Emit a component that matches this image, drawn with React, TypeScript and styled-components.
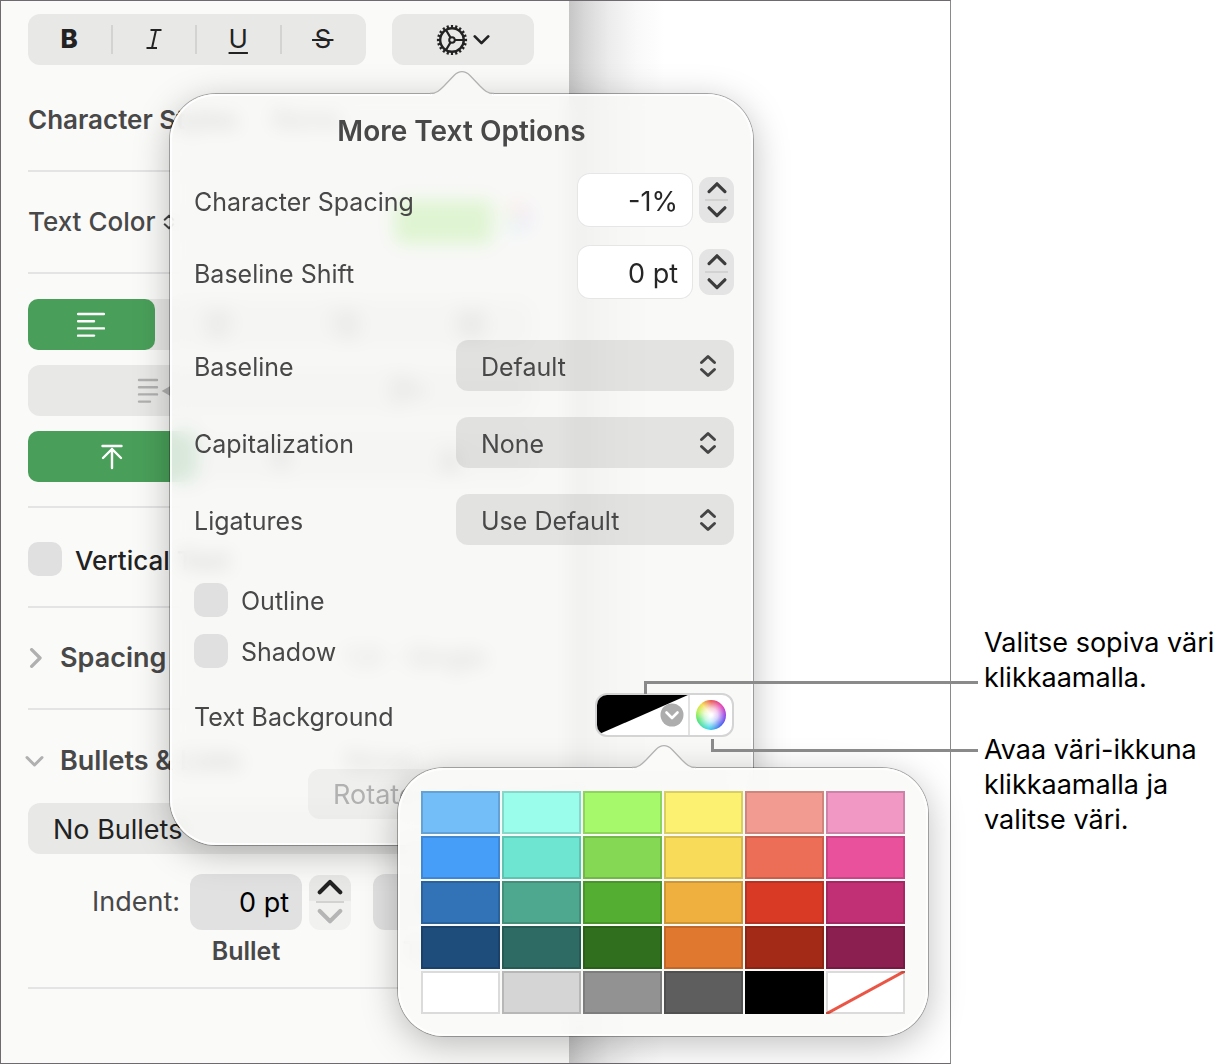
import React from "react";
import styled, { createGlobalStyle, css } from "styled-components";

const ink = "#484848";
const green = "#499f59";
const line = "#e4e4e4";

const GlobalStyle = createGlobalStyle`
  * { box-sizing: border-box; }
  body { margin: 0; background: #fff; }
  body, button, input, select {
    font-family: Inter, "Liberation Sans", sans-serif;
    font-size: 27px;
    line-height: 34px;
    color: ${ink};
  }
  button, input, select { margin: 0; padding: 0; border: 0; background: none; outline: none; appearance: none; }
  svg { display: block; flex: none; }
  h2, h3, p { margin: 0; font-size: 27px; font-weight: 600; }
`;

const Page = styled.main`
  display: grid;
  grid-template-columns: minmax(0, 1fr) 270px;
  min-height: 100vh;
`;

const Window = styled.section`
  position: relative;
  display: flex;
  border: 1px solid #6e6a6f;
  border-right-color: #8a8a8a;
`;

const Sidebar = styled.aside`
  flex: 0 0 568px;
  padding: 13px 35px 20px 27px;
  background: #fafaf9;
`;

const Canvas = styled.div`
  flex: 1;
  background: linear-gradient(90deg, #c6c6c6 0, #d8d8d8 16px, #ececec 40px, #f9f9f9 68px, #fff 96px);
`;

const Divider = styled.hr`
  margin: 0;
  height: 2px;
  border: 0;
  background: ${line};
`;

const Toolbar = styled.div`
  display: flex;
  gap: 26px;
  height: 51px;
  margin-bottom: 5px;
`;

const Group = styled.div`
  display: flex;
  flex: 1;
  height: 51px;
  border-radius: 12px;
  background: #e8e8e7;
`;

const Tool = styled.button<{ $rule?: boolean }>`
  position: relative;
  flex: 1;
  display: flex;
  align-items: center;
  justify-content: center;
  padding: 0 2px 2px 0;
  color: #222;
  ${(p) => p.$rule && css`
    &::after {
      content: "";
      position: absolute;
      right: 0;
      top: 11px;
      width: 2px;
      height: 29px;
      background: #d3d3d2;
    }
  `}
`;

const Glyph = styled.span<{ $bold?: boolean; $line?: string }>`
  font-size: 26px;
  font-weight: ${(p) => (p.$bold ? 800 : 400)};
  text-decoration: ${(p) => p.$line || "none"};
  text-decoration-thickness: 2px;
  text-underline-offset: 4px;
`;

const GearButton = styled.button`
  display: flex;
  align-items: center;
  justify-content: center;
  gap: 5px;
  width: 142px;
  border-radius: 12px;
  background: #e8e8e7;
`;

const Row = styled.div<{ $h?: number }>`
  display: flex;
  align-items: center;
  height: ${(p) => p.$h || 100}px;
`;

const CheckRow = styled(Row)`
  height: 98px;
  padding-top: 4px;
`;

const Name = styled.h3`
  width: 244px;
  font-size: 26px;
`;

const PlainName = styled.span`
  margin-right: 8px;
  font-size: 26px;
  font-weight: 500;
`;

const ColorChip = styled.button`
  width: 98px;
  height: 44px;
  margin-left: auto;
  border-radius: 8px 0 0 8px;
  background: #6ee42c;
`;

const Wheel = styled.button<{ $size: number }>`
  width: ${(p) => p.$size}px;
  height: ${(p) => p.$size}px;
  border-radius: 50%;
  background:
    radial-gradient(closest-side, #fff 8%, rgba(255, 255, 255, 0.75) 45%, rgba(255, 255, 255, 0) 100%),
    conic-gradient(#e8504a, #e23ab4 50deg, #8a3fe8 95deg, #3c5cf0 135deg, #35d6e6 190deg, #4fe36c 250deg, #b4f04a 285deg, #f6d93c 320deg, #e8504a);
`;

const WheelSlot = styled.span`
  margin: 0 4px 0 10px;
`;

const Segments = styled.div`
  display: grid;
  gap: 15px;
  padding: 25px 0 24px;
`;

const Segment = styled.button<{ $on?: boolean; $dim?: boolean }>`
  flex: 1;
  display: flex;
  align-items: center;
  justify-content: center;
  border-radius: 10px;
  color: ${(p) => (p.$on ? "#fff" : p.$dim ? "#b0b0b0" : "#3a3a3a")};
  background: ${(p) => (p.$on ? green : "transparent")};
`;

const CheckLabel = styled.label<{ $dark?: boolean }>`
  display: flex;
  align-items: center;
  gap: 13px;
  font-size: ${(p) => (p.$dark ? 26 : 25)}px;
  font-weight: ${(p) => (p.$dark ? 500 : 400)};
  color: ${(p) => (p.$dark ? "#222" : ink)};
`;

const CheckText = styled.span`
  padding-top: 3px;
`;

const Check = styled.input`
  width: 34px;
  height: 34px;
  border-radius: 10px;
  background: #e0e0e0;
`;

const Disclosure = styled.button`
  display: flex;
  align-items: center;
  gap: 14px;
  width: 322px;
  margin-left: -5px;
  font-weight: 600;
`;

const DisclosureMark = styled.span`
  display: flex;
  justify-content: center;
  width: 23px;
`;

const HeaderRow = styled(Row)`
  height: 93px;
  padding-top: 9px;
`;

const SelectBox = styled.div<{ $w?: number }>`
  position: relative;
  width: ${(p) => (p.$w ? p.$w + "px" : "100%")};
`;

const Select = styled.select<{ $dark?: boolean }>`
  width: 100%;
  height: 51px;
  padding: 2px 60px 0 25px;
  border-radius: 12px;
  font-size: ${(p) => (p.$dark ? 27 : 25)}px;
  color: ${(p) => (p.$dark ? "#222" : ink)};
  background: ${(p) => (p.$dark ? "#e8e8e7" : "rgba(0, 0, 0, 0.085)")};
`;

const SelectMark = styled.span`
  position: absolute;
  right: 17px;
  top: 14px;
  pointer-events: none;
`;

const IndentRow = styled.div`
  display: grid;
  grid-template-columns: 155px 112px 42px 112px;
  column-gap: 7px;
  margin: 20px 0 15px;
  align-items: center;
`;

const IndentLabel = styled.label`
  padding-right: 3px;
  text-align: right;
`;

const IndentField = styled.input`
  width: 100%;
  height: 56px;
  padding: 0 13px;
  border-radius: 12px;
  background: #e1e1e1;
  color: #000;
  text-align: right;
`;

const NextField = styled.div`
  margin: 0 -15px 0 15px;
`;

const Caption = styled.span<{ $col: number }>`
  grid-column: ${(p) => p.$col};
  font-size: 25px;
  font-weight: 600;
  line-height: 42px;
  text-align: center;
`;

const TextCaption = styled(Caption)`
  padding-left: 30px;
`;

const Stepper = styled.div<{ $large?: boolean }>`
  width: ${(p) => (p.$large ? 42 : 35)}px;
  height: ${(p) => (p.$large ? 55 : 46)}px;
  display: grid;
  grid-template-rows: 1fr 2px 1fr;
  justify-items: center;
  overflow: hidden;
  border-radius: 11px;
  background: ${(p) => (p.$large ? "#f1f1f0" : "#e4e4e4")};
`;

const Step = styled.button<{ $fill?: boolean }>`
  display: flex;
  align-items: center;
  justify-content: center;
  width: 100%;
  background: ${(p) => (p.$fill ? "#e8e8e7" : "transparent")};
`;

const StepRule = styled.span`
  width: 66%;
  background: #d2d2d1;
`;

const Popover = styled.div<{ $strong?: boolean }>`
  position: absolute;
  border-radius: 46px;
  background: ${(p) => (p.$strong ? "rgba(250, 250, 249, 0.93)" : "rgba(248, 248, 247, 0.82)")};
  backdrop-filter: blur(9px);
  box-shadow:
    0 0 0 1px rgba(0, 0, 0, 0.3),
    0 8px 36px rgba(0, 0, 0, 0.26),
    inset 0 0 0 2px rgba(255, 255, 255, 0.8);
`;

const TextPopover = styled(Popover)`
  left: 169px;
  top: 93px;
  width: 583px;
  padding: 19px 19px 26px 24px;
`;

const SwatchPopover = styled(Popover)`
  left: 397px;
  top: 767px;
  width: 530px;
  padding: 23px 23px 22px;
`;

const ArrowSlot = styled.span<{ $left: number }>`
  position: absolute;
  left: ${(p) => p.$left}px;
  top: -24px;
`;

const Title = styled.h2`
  text-align: center;
  font-size: 28px;
  line-height: 36px;
  margin: 0 5px 25px 0;
`;

const Option = styled.div<{ $gap: number }>`
  display: flex;
  align-items: center;
  margin-bottom: ${(p) => p.$gap}px;
`;

const OptionLabel = styled.label`
  flex: 1;
  padding-top: 3px;
  font-size: 25px;
  white-space: nowrap;
`;

const Field = styled.input`
  width: 114px;
  height: 52px;
  margin-right: 7px;
  padding: 2px 14px 0;
  border-radius: 12px;
  background: #fff;
  box-shadow: 0 0 0 1px #e6e6e6;
  color: #262626;
  text-align: right;
`;

const Well = styled.div`
  display: flex;
  align-items: center;
  width: 139px;
  height: 44px;
  overflow: hidden;
  border: 2px solid #d4d4d4;
  border-radius: 12px;
  background: #fff;
`;

const WellColor = styled.button`
  width: 93px;
  height: 40px;
  border-right: 2px solid #e2e2e2;
`;

const WellWheel = styled.span`
  display: flex;
  flex: 1;
  justify-content: center;
`;

const Rotate = styled.button`
  display: block;
  width: 426px;
  height: 50px;
  margin-left: auto;
  padding: 2px 0 0 25px;
  border-radius: 12px;
  background: rgba(0, 0, 0, 0.04);
  color: #b1b1b1;
  text-align: left;
`;

const Swatches = styled.div`
  display: grid;
  grid-template-columns: repeat(6, 1fr);
  grid-auto-rows: 43px;
  gap: 2px;
`;

const Swatch = styled.button<{ $color: string }>`
  background: ${(p) => p.$color};
  box-shadow: inset 0 0 0 2px rgba(0, 0, 0, 0.14);
`;

const Connector = styled.span<{ $left: number; $top: number; $up?: boolean }>`
  position: absolute;
  left: ${(p) => p.$left}px;
  top: ${(p) => p.$top}px;
  right: -28px;
  height: 13px;
  border-left: 3px solid #8a8a8a;
  ${(p) => (p.$up ? "border-bottom" : "border-top")}: 3px solid #8a8a8a;
`;

const Callouts = styled.div`
  display: flex;
  flex-direction: column;
  gap: 37px;
  padding: 625px 0 0 33px;
`;

const Callout = styled.p`
  line-height: 35px;
  font-weight: 400;
  color: #000;
`;

const Chevron = ({ dir, color = "#3c3c3c", size = 18, w = 3 }: { dir: "up" | "down" | "right"; color?: string; size?: number; w?: number }) => {
  const d = { up: "M1.5 11 9 3.5l7.5 7.5", down: "M1.5 3.5 9 11l7.5-7.5", right: "M5.5 1 13 8.500l-7.500 7.500" }[dir];
  return (
    <svg width={size} height={dir === "right" ? size : Math.round(size * 0.8)} viewBox={dir === "right" ? "-0.500 -0.500 18 18" : "-0.5 0 19 15"} fill="none" stroke={color} strokeWidth={w} strokeLinecap="round" strokeLinejoin="round">
      <path d={d} />
    </svg>
  );
};

const UpDown = ({ small }: { small?: boolean }) => (
  <svg width={small ? 12 : 18} height={small ? 16 : 24} viewBox="0 0 18 24" fill="none" stroke="#454545" strokeWidth="3" strokeLinecap="round" strokeLinejoin="round">
    <path d="M2.500 8.500 9 2.500l6.500 6M2.500 15.500l6.500 6 6.500-6" />
  </svg>
);

const Gear = () => (
  <svg width="32" height="32" viewBox="-16 -16 32 32" fill="none" stroke="#222">
    <circle r="11.800" strokeWidth="2.400" />
    <circle r="13.600" strokeWidth="3" pathLength="40" strokeDasharray="1 1" strokeDashoffset="0.500" />
    <circle r="2.800" strokeWidth="2" />
    <path d="M3 0H11.500M-1.600-2.600-6-10M-1.600 2.600-6 10" strokeWidth="2.200" />
  </svg>
);

const Lines = ({ rows }: { rows: [number, number][] }) => (
  <svg width="28" height="26" viewBox="0 0 28 26" stroke="currentColor" strokeWidth="2.400" strokeLinecap="round">
    {rows.map(([a, b], i) => (
      <path key={i} d={`M${a} ${2 + i * 7.2}H${b}`} />
    ))}
  </svg>
);

const IndentIcon = ({ out }: { out?: boolean }) => (
  <svg width="36" height="26" viewBox="0 0 36 26" stroke="currentColor" strokeWidth="2.400" strokeLinecap="round">
    <path d="M2 2H20M2 9.200H20M2 16.400H20M2 23.600H13" />
    <path d={out ? "M33 13l-6-3.500v7z" : "M27 13l6-3.500v7z"} fill="currentColor" />
  </svg>
);

const VerticalIcon = ({ kind }: { kind: "top" | "middle" | "bottom" }) => (
  <svg width="22" height="26" viewBox="0 0 22 26" fill="none" stroke="currentColor" strokeWidth="2.400" strokeLinecap="round" strokeLinejoin="round">
    {kind === "top" && <path d="M1.500 2H20.500M11 24V5M2 14l9-9 9 9" />}
    {kind === "middle" && <path d="M1.500 13H20.500M11 1v8M7 5l4 4 4-4M11 25v-8M7 21l4-4 4 4" />}
    {kind === "bottom" && <path d="M1.500 24H20.500M11 2V21M2 12l9 9 9-9" />}
  </svg>
);

const Arrow = ({ left, fill }: { left: number; fill: string }) => (
  <ArrowSlot $left={left}>
    <svg width="64" height="27" viewBox="0 0 64 27">
      <path d="M2 24C8 23 10 20 14 16L24 5.500C29 .2 35 .2 40 5.500L50 16C54 20 56 23 62 24V27H2Z" fill={fill} />
      <path d="M0 23.500C7 23.500 10 20 14 16L24 5.500C29 .2 35 .2 40 5.500L50 16C54 20 57 23.500 64 23.500" fill="none" stroke="#b2b2b2" strokeWidth="1.300" />
    </svg>
  </ArrowSlot>
);

const colors = [
  "#73bdf9", "#9afcea", "#a5f96b", "#fdf171", "#f29b91", "#f198c5",
  "#479ef8", "#6de5d0", "#84d853", "#f8db59", "#ec6e57", "#ea519c",
  "#3173b6", "#4ea88f", "#54ae32", "#f0b03f", "#d83a26", "#c12f74",
  "#1e4c7b", "#2d6b64", "#306f1e", "#e1782f", "#a22a17", "#8a1f50",
  "#ffffff", "#d5d5d5", "#929292", "#5e5e5e", "#000000",
];

const Popup = ({ id, value, width, dark }: { id: string; value: string; width?: number; dark?: boolean }) => (
  <SelectBox $w={width}>
    <Select id={id} $dark={dark} aria-label={value} defaultValue={value}>
      <option>{value}</option>
    </Select>
    <SelectMark><UpDown /></SelectMark>
  </SelectBox>
);

const NumberRow = ({ id, label, value, gap }: { id: string; label: string; value: string; gap: number }) => (
  <Option $gap={gap}>
    <OptionLabel htmlFor={id}>{label}</OptionLabel>
    <Field id={id} defaultValue={value} />
    <Stepper>
      <Step aria-label="Increase"><Chevron dir="up" size={20} /></Step>
      <StepRule />
      <Step aria-label="Decrease"><Chevron dir="down" size={20} /></Step>
    </Stepper>
  </Option>
);

export default function App() {
  return (
    <Page>
      <GlobalStyle />
      <Window>
        <Sidebar>
          <Toolbar>
            <Group>
              <Tool $rule aria-label="Bold"><Glyph $bold>B</Glyph></Tool>
              <Tool $rule aria-label="Italic">
                <svg width="16" height="20" viewBox="0 0 16 20" fill="none" stroke="#222" strokeWidth="2">
                  <path d="M4.500 1H15.500M.5 19H11M10 1 6 19" />
                </svg>
              </Tool>
              <Tool $rule aria-label="Underline"><Glyph $line="underline">U</Glyph></Tool>
              <Tool aria-label="Strikethrough"><Glyph $line="line-through">&#8202;S&#8202;</Glyph></Tool>
            </Group>
            <GearButton aria-label="Advanced options">
              <Gear />
              <Chevron dir="down" color="#222" size={17} />
            </GearButton>
          </Toolbar>

          <Row>
            <Name>Character Styles</Name>
            <span>None</span>
          </Row>
          <Divider />
          <Row>
            <PlainName>Text Color</PlainName>
            <UpDown small />
            <ColorChip aria-label="Text color" />
            <WheelSlot><Wheel $size={28} aria-label="Color wheel" /></WheelSlot>
          </Row>
          <Divider />

          <Segments>
            <Group>
              <Segment $on aria-label="Align left"><Lines rows={[[1, 27], [1, 17], [1, 27], [1, 17]]} /></Segment>
              <Segment aria-label="Center"><Lines rows={[[1, 27], [6, 22], [1, 27], [6, 22]]} /></Segment>
              <Segment aria-label="Align right"><Lines rows={[[1, 27], [11, 27], [1, 27], [11, 27]]} /></Segment>
              <Segment aria-label="Justify"><Lines rows={[[1, 27], [1, 27], [1, 27], [1, 27]]} /></Segment>
            </Group>
            <Group>
              <Segment $dim aria-label="Decrease indent"><IndentIcon /></Segment>
              <Segment aria-label="Increase indent"><IndentIcon out /></Segment>
            </Group>
            <Group>
              <Segment $on aria-label="Top"><VerticalIcon kind="top" /></Segment>
              <Segment aria-label="Middle"><VerticalIcon kind="middle" /></Segment>
              <Segment aria-label="Bottom"><VerticalIcon kind="bottom" /></Segment>
            </Group>
          </Segments>
          <Divider />

          <CheckRow>
            <CheckLabel $dark><Check type="checkbox" /><CheckText>Vertical Text</CheckText></CheckLabel>
          </CheckRow>
          <Divider />
          <Row>
            <Disclosure><DisclosureMark><Chevron dir="right" color="#b0b0b0" size={20} /></DisclosureMark>Spacing</Disclosure>
            <span>1.0 - Single</span>
          </Row>
          <Divider />
          <HeaderRow>
            <Disclosure><DisclosureMark><Chevron dir="down" color="#b0b0b0" size={19} /></DisclosureMark>Bullets &amp; Lists</Disclosure>
            <span>None</span>
          </HeaderRow>
          <Popup id="bullets" value="No Bullets" dark />

          <IndentRow>
            <IndentLabel htmlFor="indent">Indent:</IndentLabel>
            <IndentField id="indent" defaultValue="0 pt" />
            <Stepper $large>
              <Step $fill aria-label="Increase"><Chevron dir="up" color="#222" size={26} /></Step>
              <StepRule />
              <Step aria-label="Decrease"><Chevron dir="down" color="#b5b5b5" size={26} /></Step>
            </Stepper>
            <NextField><IndentField aria-label="Text indent" defaultValue="0 pt" /></NextField>
            <Caption $col={2}>Bullet</Caption>
            <TextCaption $col={4}>Text</TextCaption>
          </IndentRow>
          <Divider />
        </Sidebar>
        <Canvas />

        <TextPopover role="dialog" aria-label="More Text Options">
          <Arrow left={260} fill="#f8f8f7" />
          <Title>More Text Options</Title>
          <NumberRow id="spacing" label="Character Spacing" value="-1%" gap={20} />
          <NumberRow id="shift" label="Baseline Shift" value="0 pt" gap={42} />
          <Option $gap={26}>
            <OptionLabel htmlFor="baseline">Baseline</OptionLabel>
            <Popup id="baseline" value="Default" width={278} />
          </Option>
          <Option $gap={26}>
            <OptionLabel htmlFor="caps">Capitalization</OptionLabel>
            <Popup id="caps" value="None" width={278} />
          </Option>
          <Option $gap={36}>
            <OptionLabel htmlFor="ligatures">Ligatures</OptionLabel>
            <Popup id="ligatures" value="Use Default" width={278} />
          </Option>
          <Option $gap={14}>
            <CheckLabel><Check type="checkbox" /><CheckText>Outline</CheckText></CheckLabel>
          </Option>
          <Option $gap={24}>
            <CheckLabel><Check type="checkbox" /><CheckText>Shadow</CheckText></CheckLabel>
          </Option>
          <Option $gap={32}>
            <OptionLabel as="span">Text Background</OptionLabel>
            <Well>
              <WellColor aria-label="Choose a color">
                <svg width="91" height="40" viewBox="0 0 91 40">
                  <path d="M0 0H91L0 40Z" fill="#000" />
                  <circle cx="75" cy="20" r="11.500" fill="#adadad" />
                  <path d="M69.500 17.500 75 23l5.500-5.500" fill="none" stroke="#fff" strokeWidth="2.600" strokeLinecap="round" strokeLinejoin="round" />
                </svg>
              </WellColor>
              <WellWheel><Wheel $size={30} aria-label="Open color window" /></WellWheel>
            </Well>
          </Option>
          <Rotate disabled>Rotate to Horizontal</Rotate>
        </TextPopover>

        <SwatchPopover $strong role="dialog" aria-label="Colors">
          <Arrow left={234} fill="#fafaf9" />
          <Swatches>
            {colors.map((c) => (
              <Swatch key={c} $color={c} aria-label={c} />
            ))}
            <Swatch $color="linear-gradient(to bottom right, #fff calc(50% - 2px), #ea5545 calc(50% - 1px), #ea5545 calc(50% + 1px), #fff calc(50% + 2px))" aria-label="No color" />
          </Swatches>
        </SwatchPopover>

        <Connector $left={643} $top={680} />
        <Connector $left={710} $top={738} $up />
      </Window>

      <Callouts>
        <Callout>Valitse sopiva väri klikkaamalla.</Callout>
        <Callout>Avaa väri-ikkuna klikkaamalla ja valitse väri.</Callout>
      </Callouts>
    </Page>
  );
}
